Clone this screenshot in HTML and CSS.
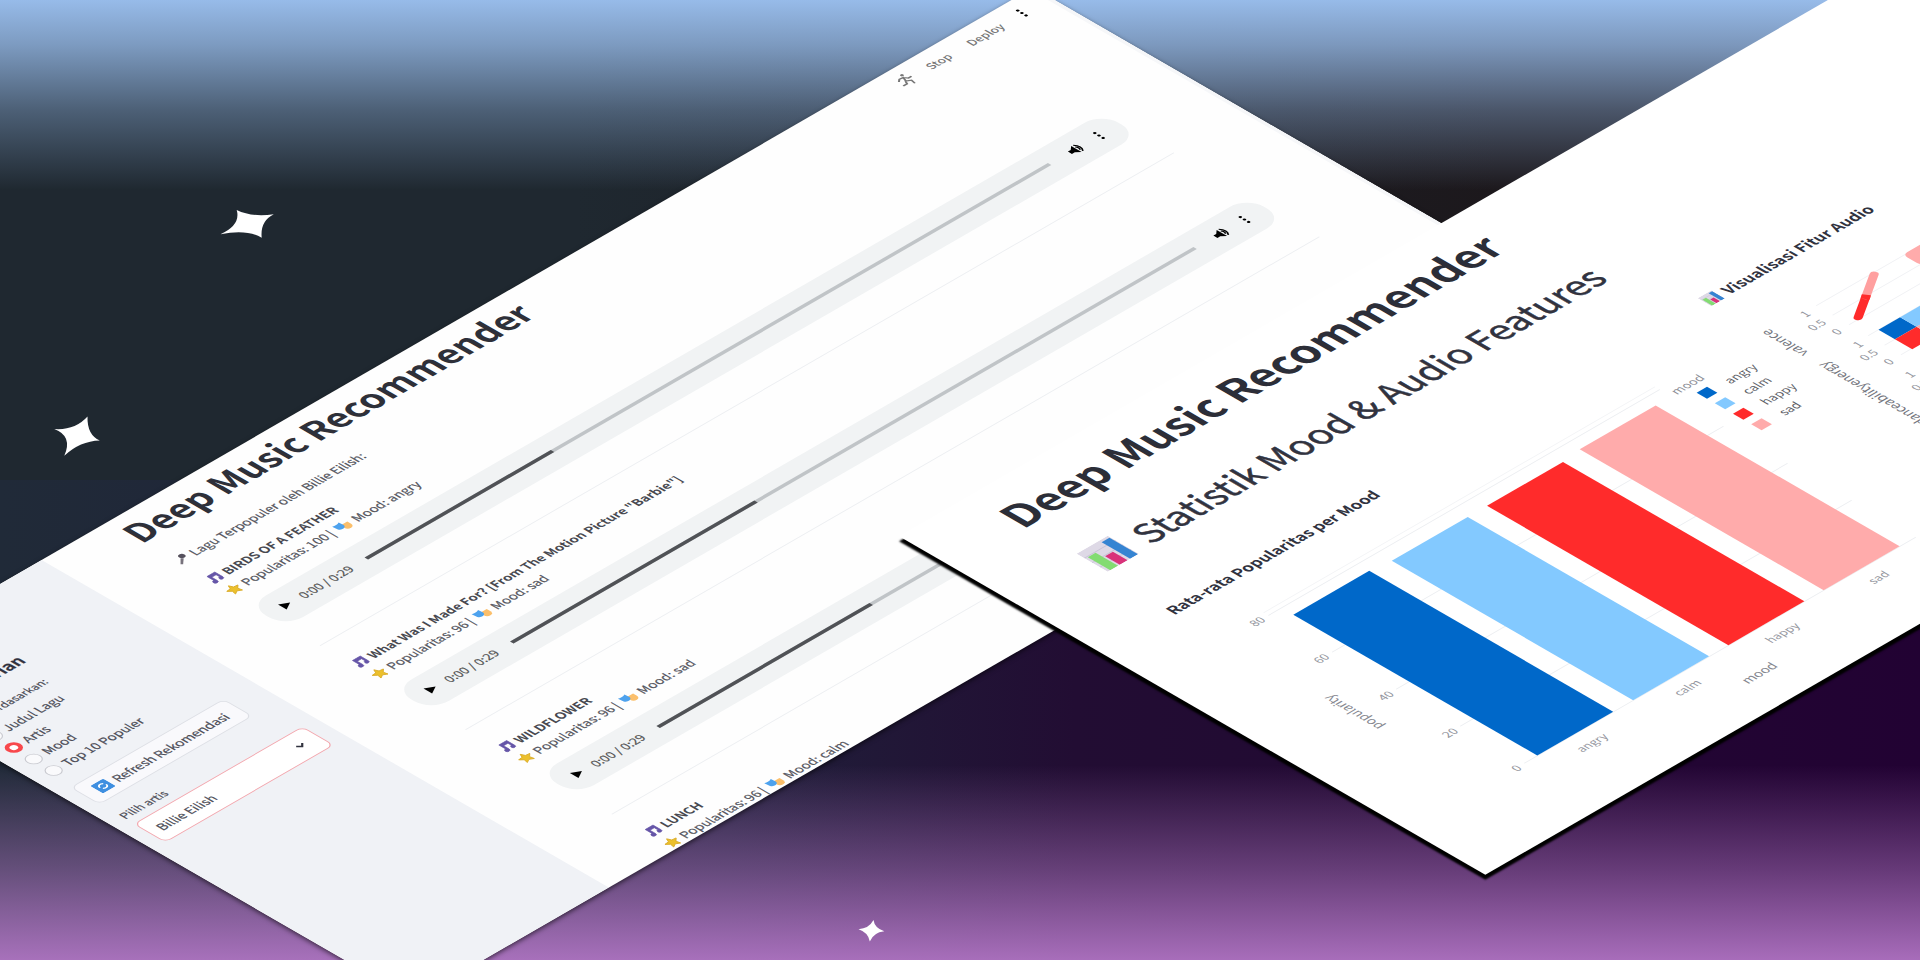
FILE: index.html
```html
<!DOCTYPE html>
<html lang="id">
<head>
<meta charset="utf-8">
<title>Deep Music Recommender</title>
<link rel="stylesheet" href="styles.css">
</head>
<body>
<svg width="0" height="0" class="defs">
  <defs>
    <symbol id="note" viewBox="0 0 14 14"><path d="M4 1h9v9.500a2 2 0 1 1-2-2V4.500H6v6.500a2.200 2.200 0 1 1-2-2.200z" fill="#6656a8" stroke="#6656a8" stroke-width=".6"/></symbol>
    <symbol id="star" viewBox="0 0 14 14"><path d="M7 .6l1.900 4.200 4.600.5-3.400 3.100.9 4.600L7 10.700 3 13l.9-4.600L.5 5.300l4.600-.5z" fill="#ecc02c" stroke="#d9aa24" stroke-width=".8"/></symbol>
    <symbol id="masks" viewBox="0 0 16 14"><path d="M7 5h8v4.500a4 4 0 0 1-8 0z" fill="#fbbf6b"/><path d="M1 1.500q4 1.500 8-.5l.3 5.500a4 4 0 0 1-7.600 1z" fill="#4da2ee"/></symbol>
    <symbol id="mic" viewBox="0 0 14 14"><circle cx="10" cy="4" r="3" fill="#55505c"/><path d="M7 5.500l1.800 1.800L2.500 13 1 11.500z" fill="#77727c"/></symbol>
    <symbol id="chart" viewBox="0 0 36 36"><path d="M0 0h36v36H0z" fill="#ded9e6"/><path d="M0 9h36M0 18h36M0 27h36" stroke="#c8c2d6" stroke-width="1"/><path d="M3 10h9v26H3z" fill="#83dc72"/><path d="M14 19h9v17h-9z" fill="#d9327a"/><path d="M26 3h9v33h-9z" fill="#3584d2"/></symbol>
    <symbol id="volume" viewBox="0 0 16 16"><path d="M1 5.500h3.500L9 1.500v13L4.500 10.500H1z"/><path d="M10.500 5q2.500 3 0 6M11 2q5 6 0 12" fill="none" stroke="#000" stroke-width="1.500"/></symbol>
    <symbol id="kebab" viewBox="0 0 4 16"><circle cx="2" cy="2.500" r="1.700"/><circle cx="2" cy="8" r="1.700"/><circle cx="2" cy="13.500" r="1.700"/></symbol>
  </defs>
</svg>
<main class="stage">
  <svg class="sparkles" viewBox="0 0 1920 960">
    <path d="M236.700 210Q252 217.500 273.800 214.200Q260 221 261.700 237.700Q247 229 220.500 234.200Q241 225 236.700 210z"/>
    <path d="M87.500 416.500Q87 435 99.800 440.500Q80 441 64.300 455.800Q73 436 54.300 429Q75 430.500 87.500 416.500z"/>
    <path d="M873.500 920Q874.500 928 884.300 931.300Q873.500 932.500 869.800 941.500Q868.500 932.500 858.500 929.200Q869 928.500 873.500 920z"/>
  </svg>

  <section class="window songs">
    <aside class="sidebar">
      <h2 class="side-title">Pencarian</h2>
      <p class="side-label">Cari berdasarkan:</p>
      <ul class="radios">
        <li><i class="radio"></i><span>Judul Lagu</span></li>
        <li><i class="radio on"></i><span>Artis</span></li>
        <li><i class="radio"></i><span>Mood</span></li>
        <li><i class="radio"></i><span>Top 10 Populer</span></li>
      </ul>
      <div class="button">
        <svg width="15" height="15" viewBox="0 0 15 15"><rect width="15" height="15" rx="2" fill="#3f8fe0"/><path d="M4 7.500a3.500 3.500 0 0 1 6-2.300M11 7.500a3.500 3.500 0 0 1-6 2.300" fill="none" stroke="#fff" stroke-width="1.500"/></svg>
        <span>Refresh Rekomendasi</span>
      </div>
      <p class="pick-label">Pilih artis</p>
      <div class="select"><span>Billie Eilish</span><svg width="10" height="7" viewBox="0 0 10 7"><path d="M1.500 1.500L5 5l3.500-3.500" fill="none" stroke="#31333f" stroke-width="1.800"/></svg></div>
    </aside>
    <div class="content">
      <header class="toolbar">
        <svg width="20" height="20" viewBox="0 0 20 20" fill="none" stroke="#777" stroke-width="1.700"><circle cx="12.500" cy="3" r="1.600" fill="#777" stroke="none"/><path d="M4 8l3-2.500 4 .5-2 5 4 2.500-1 5M11 6l2.500 3.500H17M8.500 11L7 14.500H2.500"/></svg>
        <span class="stop">Stop</span><span class="deploy">Deploy</span>
        <svg class="menu" width="4" height="14"><use href="#kebab"/></svg>
      </header>
      <h1>Deep Music Recommender</h1>
      <p class="intro"><svg width="14" height="14"><use href="#mic"/></svg><span>Lagu Terpopuler oleh Billie Eilish:</span></p>
      <article class="song">
        <h3><svg width="14" height="14"><use href="#note"/></svg><span>BIRDS OF A FEATHER</span></h3>
        <p><svg width="14" height="14"><use href="#star"/></svg><span>Popularitas: 100 |</span><svg class="mask" width="16" height="14"><use href="#masks"/></svg><span>Mood: angry</span></p>
        <div class="audio"><i class="play"></i><span>0:00 / 0:29</span><div class="track"><i style="width:215px"></i></div><svg width="15" height="15"><use href="#volume"/></svg><svg class="dots" width="4" height="14"><use href="#kebab"/></svg></div>
      </article>
      <article class="song">
        <h3><svg width="14" height="14"><use href="#note"/></svg><span>What Was I Made For? [From The Motion Picture "Barbie"]</span></h3>
        <p><svg width="14" height="14"><use href="#star"/></svg><span>Popularitas: 96 |</span><svg class="mask" width="16" height="14"><use href="#masks"/></svg><span>Mood: sad</span></p>
        <div class="audio"><i class="play"></i><span>0:00 / 0:29</span><div class="track"><i style="width:282px"></i></div><svg width="15" height="15"><use href="#volume"/></svg><svg class="dots" width="4" height="14"><use href="#kebab"/></svg></div>
      </article>
      <article class="song">
        <h3><svg width="14" height="14"><use href="#note"/></svg><span>WILDFLOWER</span></h3>
        <p><svg width="14" height="14"><use href="#star"/></svg><span>Popularitas: 96 |</span><svg class="mask" width="16" height="14"><use href="#masks"/></svg><span>Mood: sad</span></p>
        <div class="audio"><i class="play"></i><span>0:00 / 0:29</span><div class="track"><i style="width:246px"></i></div><svg width="15" height="15"><use href="#volume"/></svg><svg class="dots" width="4" height="14"><use href="#kebab"/></svg></div>
      </article>
      <article class="song">
        <h3><svg width="14" height="14"><use href="#note"/></svg><span>LUNCH</span></h3>
        <p><svg width="14" height="14"><use href="#star"/></svg><span>Popularitas: 96 |</span><svg class="mask" width="16" height="14"><use href="#masks"/></svg><span>Mood: calm</span></p>
      </article>
    </div>
  </section>

  <section class="window stats">
    <h1>Deep Music Recommender</h1>
    <h2><svg width="36" height="36"><use href="#chart"/></svg><span>Statistik Mood &amp; Audio Features</span></h2>
    <div class="captions">
      <h3>Rata-rata Popularitas per Mood</h3>
      <h3><svg width="16" height="16"><use href="#chart"/></svg><span>Visualisasi Fitur Audio</span></h3>
    </div>
    <svg class="charts" width="1366" height="426" viewBox="0 250 1366 426">
      <path d="M134 292.500H586M134 366H586M134 440H586M134 514H586M134 588H586" stroke="#eceef1" fill="none"/>
      <path d="M134 287H586" stroke="#f3f4f6"/>
      <rect x="149.300" y="306" width="87.700" height="281.700" fill="#0068c9"/>
      <rect x="260" y="309" width="87.700" height="278.700" fill="#83c9ff"/>
      <rect x="370" y="309" width="87.700" height="278.700" fill="#ff2b2b"/>
      <rect x="480" y="306" width="87.700" height="281.700" fill="#ffabab"/>
      <g class="tick" text-anchor="middle">
        <text x="121.500" y="296.500">80</text><text x="121.500" y="370.500">60</text><text x="121.500" y="445">40</text><text x="121.500" y="519">20</text><text x="124.500" y="592.500">0</text>
        <text x="193.500" y="611">angry</text><text x="303.700" y="611">calm</text><text x="413.500" y="611">happy</text><text x="524.500" y="611">sad</text>
      </g>
      <g class="axis" text-anchor="middle">
        <text x="360" y="638">mood</text>
        <text transform="translate(91 438.500) rotate(-90)">popularity</text>
      </g>
      <text class="legend-title" x="607" y="308" text-anchor="middle">mood</text>
      <rect x="604" y="317" width="12" height="12" fill="#0068c9"/><rect x="604" y="338" width="12" height="12" fill="#83c9ff"/><rect x="604" y="359" width="12" height="12" fill="#ff2b2b"/><rect x="604" y="380" width="12" height="12" fill="#ffabab"/>
      <g class="legend"><text x="632" y="328">angry</text><text x="632" y="349">calm</text><text x="632" y="370">happy</text><text x="632" y="391">sad</text></g>

      <path d="M760 299H1300M760 318H1300M760 337H1300M760 359H1300M760 378H1300M760 397H1300" stroke="#f0f1f4" fill="none"/>
      <path d="M772.500 335L798 318.500" stroke="#ff2b2b" stroke-width="7.500" stroke-linecap="round"/>
      <path d="M825 301L798 318.500" stroke="#ff9f9f" stroke-width="7.500" stroke-linecap="round"/>
      <path d="M800 317l-5 3.500" stroke="#ff2b2b" stroke-width="7.500"/>
      <rect x="772" y="359" width="25" height="19" fill="#0068c9"/><rect x="797" y="359" width="25" height="19" fill="#83c9ff"/>
      <rect x="772" y="378" width="25" height="20" fill="#ff2b2b"/><rect x="797" y="378" width="25" height="20" fill="#ffabab"/>
      <rect x="861" y="298" width="60" height="21" rx="5" fill="#ffabab"/>
      <g class="tick" text-anchor="middle">
        <text x="745.500" y="305">1</text><text x="741" y="323">0.5</text><text x="746" y="341">0</text>
        <text x="745.500" y="366">1</text><text x="741" y="383">0.5</text><text x="746" y="401">0</text>
        <text x="745.500" y="426">1</text><text x="741" y="443">0.5</text><text x="746" y="461">0</text>
      </g>
      <g class="axis dark" text-anchor="middle">
        <text transform="translate(709.500 318) rotate(-90)">valence</text>
        <text transform="translate(709.500 381) rotate(-90)">energy</text>
        <text transform="translate(709.500 441) rotate(-90)">danceability</text>
      </g>
    </svg>
  </section>
</main>
</body>
</html>
```
FILE: styles.css
```css
* { box-sizing: border-box; margin: 0; padding: 0; }
body { width: 1920px; height: 960px; overflow: hidden; font-family: "Noto Sans CJK JP", "Noto Sans", sans-serif; color: #31333f; }
svg { display: block; flex: none; }
i { display: block; }
.defs { position: absolute; }
.stage {
  position: relative; width: 1920px; height: 960px; overflow: hidden;
  background:
    linear-gradient(180deg, #97bbe9 0, rgba(151,187,233,.78) 45px, rgba(151,187,233,.38) 110px, rgba(151,187,233,0) 190px) 0 0 / 100% 480px no-repeat,
    linear-gradient(180deg, rgba(186,125,205,0) 285px, rgba(186,125,205,.45) 390px, rgba(186,123,205,.88) 480px) 0 480px / 100% 480px no-repeat,
    linear-gradient(90deg, #1f2830 0, #1f2830 30%, #1c181c 78%) 0 0 / 100% 480px no-repeat,
    linear-gradient(90deg, #202a38 0, #20203a 38%, #220d33 56%, #220233 100%) 0 480px / 100% 480px no-repeat;
}
.sparkles { position: absolute; left: 0; top: 0; width: 1920px; height: 960px; fill: #fff; }
.window { position: absolute; transform-origin: 0 0; background: #fefefe; white-space: nowrap; }
.songs {
  left: 0; top: 0; width: 1370px; height: 655px; display: flex; overflow: hidden;
  transform: matrix(.86603, -.5, .86603, .5, -153.3, 672.5);
  box-shadow: -2px 2px 5px rgba(0,0,0,.6);
}
.sidebar { width: 225px; background: #f0f2f6; padding: 75px 17px 0 14px; color: #4c4d57; -webkit-text-stroke: .2px #4c4d57; }
.side-title { width: 101px; height: 38px; line-height: 22px; font-size: 17px; color: #31333f; display: flex; justify-content: flex-end; }
.side-label { width: 93px; height: 27px; line-height: 18px; font-size: 11.300px; display: flex; justify-content: flex-end; }
.radios { list-style: none; height: 104px; display: flex; flex-direction: column; gap: 7px; font-size: 12.800px; }
.radios li { display: flex; align-items: center; gap: 5px; height: 16px; line-height: 16px; }
.radio { width: 15px; height: 15px; border: 1px solid #c9cad0; border-radius: 50%; background: #fafafc; }
.radio.on { border: 4.500px solid #f8484c; background: #fff; }
.button { width: 177px; height: 34px; border: 1px solid #dddfe5; border-radius: 7px; background: #f9f9fc; display: flex; align-items: center; gap: 5px; padding-left: 12px; font-size: 12.900px; }
.pick-label { height: 39px; padding-top: 17px; line-height: 16px; font-size: 11.600px; }
.select { width: 195px; height: 37px; border: 1.500px solid #f3a5ac; border-radius: 7px; background: #fff; display: flex; align-items: center; justify-content: space-between; padding: 0 14px 0 9px; font-size: 12.700px; }
.content { width: 1145px; box-shadow: inset -4px 0 0 #f6f7f9; padding: 9px 84px 0 75px; }
.toolbar { height: 20px; margin-right: -59px; display: flex; align-items: center; justify-content: flex-end; font-size: 11.500px; font-weight: 500; color: #777; }
.stop { margin-left: 15px; width: 47px; }
.deploy { width: 60px; }
.menu { margin-right: 5px; }
.content h1 { height: 42px; margin: -23px 0 0 -1px; line-height: 42px; font-size: 35.200px; font-weight: 700; color: #2e3039; }
.intro { height: 20px; margin-top: 22px; }
.intro, .song h3, .song p { display: flex; align-items: center; gap: 4px; line-height: 20px; font-size: 12.800px; color: #55565e; }
.intro, .song p { -webkit-text-stroke: .2px #55565e; }
.song { height: 168.800px; border-bottom: 1.500px solid #eceef1; padding-top: 27.500px; }
.intro + .song { height: 156.500px; padding-top: 16px; }
.song h3 { height: 24px; font-size: 12.650px; font-weight: 700; color: #484950; }
.song p { height: 20px; }
.song .mask { margin-left: 1px; }
.audio { height: 43px; margin: 14.500px 2px 0 -1px; border-radius: 20px; background: #f1f3f4; display: flex; align-items: center; padding-left: 18px; font-size: 12.300px; color: #555; }
.play { width: 0; height: 0; border: 5px solid transparent; border-left: 9px solid #000; border-right: 0; margin-right: 12px; }
.audio span { width: 76px; -webkit-text-stroke: .2px #555; }
.track { width: 789px; height: 3.500px; background: #c0c4c7; margin-right: 22px; }
.track i { height: 3.500px; background: #505256; }
.dots { margin-left: 18px; }
.stats {
  left: 0; top: 0; width: 1410px; height: 676.500px; padding: 20px 0 0 80px; background: #fff;
  transform: matrix(.86603, -.5, .86603, .5, 899, 536.3);
  box-shadow: -5px 5px 2px #000;
}
.stats h1 { height: 52px; margin-left: -1.500px; line-height: 52px; font-size: 43.100px; font-weight: 700; color: #2c2e38; }
.stats h2 { height: 56px; margin-top: 38px; display: flex; align-items: center; gap: 16px; font-size: 36px; font-weight: 400; padding-left: 5px; -webkit-text-stroke: .6px #31333f; }
.captions { height: 24px; margin-top: 53px; display: flex; }
.captions h3 { width: 619px; line-height: 24px; font-size: 15.600px; color: #31333f; display: flex; align-items: center; gap: 6px; }
.charts { margin-left: -80px; margin-top: 7px; overflow: visible; }
.tick { font-size: 11.700px; fill: #94969e; }
.axis { font-size: 12.900px; fill: #868890; }
.legend-title { font-size: 12px; fill: #8c8e96; }
.legend { font-size: 12.300px; fill: #5c5e66; }
.dark { font-size: 13.400px; fill: #74767e; }
```
